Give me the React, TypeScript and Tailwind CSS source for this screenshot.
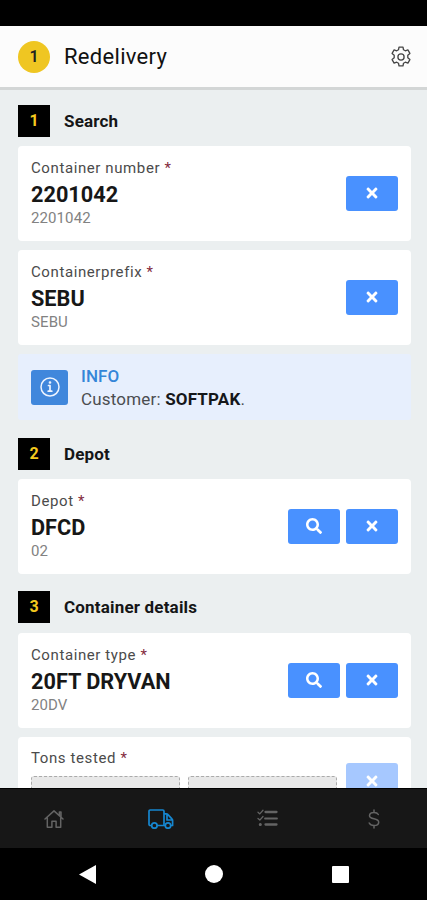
import React from "react";
import { FaSearch, FaTimes } from "react-icons/fa";

const stroke = { fill: "none", stroke: "currentColor", strokeLinecap: "round", strokeLinejoin: "round" } as const;

function GearIcon() {
  return (
    <svg viewBox="0 0 22 22" className="h-[22px] w-[22px] text-[#444]" {...stroke} strokeWidth="1.3">
      <path d="M9 1.1h4l.5 2.7 1.8 1 2.6-.9 2 3.5-2.1 1.8v2.6l2.1 1.8-2 3.5-2.6-.9-1.8 1-.5 2.7H9l-.5-2.7-1.8-1-2.6.9-2-3.5 2.1-1.8V9.2L2.1 7.4l2-3.5 2.6.9 1.8-1z" />
      <circle cx="11" cy="11" r="3.1" />
    </svg>
  );
}

function HomeIcon() {
  return (
    <svg viewBox="0 0 20 20" className="h-5 w-5" {...stroke} strokeWidth="1.5">
      <path d="M1 10 10 1.9l9 8.1M15.4 6.300V3h1.600v4.700M3.300 9v9.300h4.600v-6h4.200v6h4.600V9" />
    </svg>
  );
}

function TruckIcon() {
  return (
    <svg viewBox="0 0 26 20" className="h-5 w-[26px]" {...stroke} strokeWidth="1.7">
      <path d="M3.300 16.500H2.200Q1 16.500 1 15.300V2.200Q1 1 2.200 1h12.600Q16 1 16 2.200v14.300H9.500M16 4.800h2.300q1 0 1.700.8l3.900 4.200q.7.7.7 1.700v5h-1.200M16 16.500h.7M19 6v5h5" />
      <circle cx="6.400" cy="16.500" r="2.700" />
      <circle cx="20" cy="16.500" r="2.700" />
    </svg>
  );
}

function TasksIcon() {
  return (
    <svg viewBox="0 0 21 19" className="h-[19px] w-[21px]" {...stroke} strokeWidth="1.3">
      <path d="m1 3.300 1.800 1.600L6 1.300M1 9.500l1.800 1.600L6 7.500" />
      <rect x="8" y="2.500" width="12" height="1.100" rx=".5" />
      <path d="M8 9.500h12" strokeWidth="1.800" />
      <rect x="8" y="14.900" width="12" height="1.100" rx=".5" />
      <circle cx="3.300" cy="15.500" r=".9" fill="currentColor" />
    </svg>
  );
}

function DollarIcon() {
  return (
    <svg viewBox="0 0 12 20" className="h-5 w-3" {...stroke} strokeWidth="1.5">
      <path d="M6 1v2.500M6 16.500V19M10.300 5.500C9.500 4 8 3.500 6 3.500c-2.800 0-4.500 1.200-4.500 3.200C1.500 11 10.700 8.500 10.700 13.200c0 2.100-1.900 3.300-4.700 3.300-2.300 0-4-.8-4.800-2.500" />
    </svg>
  );
}

function InfoIcon() {
  return (
    <svg viewBox="0 0 20 20" className="h-5 w-5 text-[#edf4ff]" {...stroke} strokeWidth="1.5">
      <circle cx="10" cy="10" r="9" />
      <path d="M8.500 8.500H10V14M8.200 14.200h3.600" strokeWidth="1.7" />
      <circle cx="10" cy="5.500" r=".6" fill="currentColor" />
    </svg>
  );
}

function Section({ n, title }: { n: number; title: string }) {
  return (
    <div className="flex h-8 items-center">
      <span className="flex h-8 w-8 items-center justify-center bg-black text-[16px] font-bold text-[#f4c91f]">{n}</span>
      <h2 className="ml-3.5 text-[17px] font-bold leading-6 tracking-[0.18px] text-[#151617]">{title}</h2>
    </div>
  );
}

function Action({ search = false, disabled = false }: { search?: boolean; disabled?: boolean }) {
  return (
    <button
      aria-label={search ? "Search" : "Clear"}
      disabled={disabled}
      className={`flex h-[35px] w-[52px] items-center justify-center rounded-[3px] text-white ${disabled ? "bg-[#a6c8ff]" : "bg-[#4991ff]"}`}
    >
      {search ? <FaSearch className="h-4 w-4" /> : <FaTimes className="h-4 w-4" />}
    </button>
  );
}

function Label({ children }: { children: React.ReactNode }) {
  return (
    <div className="text-[15px] leading-5 tracking-[0.6px] text-[#4b4b4b]">
      {children} <span className="text-[#842c40]">*</span>
    </div>
  );
}

function Field({ label, value, code, search = false }: { label: string; value: string; code: string; search?: boolean }) {
  return (
    <div className="flex h-[95px] items-center justify-between rounded-[4px] bg-white pl-[13px] pr-[13.5px]">
      <div className="pb-[3px]">
        <Label>{label}</Label>
        <div className="h-8 pt-px text-[21.7px] font-bold leading-8 text-[#171717]">{value}</div>
        <div className="text-[15px] leading-[17px] tracking-[0.1px] text-[#828282]">{code}</div>
      </div>
      <div className="flex gap-1.5 pb-px">
        {search && <Action search />}
        <Action />
      </div>
    </div>
  );
}

export default function App() {
  return (
    <div className="flex h-[900px] w-full flex-col overflow-hidden bg-[#ebeff0] font-['Roboto',sans-serif]">
      <div className="h-[26px] shrink-0 bg-black" />
      <header className="flex h-16 shrink-0 items-center border-b-[3px] border-[#d3d6d6] bg-[#fcfcfc] pl-[18px] pr-[15px]">
        <span className="flex h-8 w-8 items-center justify-center rounded-full bg-[#efc622] text-[16px] font-semibold text-[#222]">1</span>
        <h1 className="ml-3.5 flex-1 text-[22px] tracking-[0.3px] text-[#111]">Redelivery</h1>
        <GearIcon />
      </header>
      <main className="h-[698px] shrink-0 overflow-hidden pl-[18px] pr-4 pt-[15px]">
        <Section n={1} title="Search" />
        <div className="mt-[9px] flex flex-col gap-[9px]">
          <Field label="Container number" value="2201042" code="2201042" />
          <Field label="Containerprefix" value="SEBU" code="SEBU" />
          <div className="flex h-[66px] items-center rounded-[3px] bg-[#e7effd] pl-[13px]">
            <span className="flex h-[35px] w-[37px] items-center justify-center rounded-[3px] bg-[#4087dc]">
              <InfoIcon />
            </span>
            <div className="ml-[13px] pt-px text-[17px] leading-[23px] text-[#4b4d50]">
              <div className="font-medium tracking-[0.1px] text-[#3486d8]">INFO</div>
              <div className="tracking-[0.18px]">Customer: <b className="text-[#15171a]">SOFTPAK</b>.</div>
            </div>
          </div>
        </div>
        <div className="mt-[18px]"><Section n={2} title="Depot" /></div>
        <div className="mt-[9px]"><Field label="Depot" value="DFCD" code="02" search /></div>
        <div className="mt-[17px]"><Section n={3} title="Container details" /></div>
        <div className="mt-2.5"><Field label="Container type" value="20FT DRYVAN" code="20DV" search /></div>
        <div className="mt-[9px] h-[95px] rounded-[4px] bg-white pl-[13px] pr-[13.5px] pt-[11px]">
          <Label>Tons tested</Label>
          <div className="mt-2 flex h-10 gap-2">
            <div className="w-[149px] shrink-0 rounded-[3px] border border-dashed border-[#aaa] bg-[#e8e8e8]" />
            <div className="w-[149px] shrink-0 rounded-[3px] border border-dashed border-[#aaa] bg-[#e8e8e8]" />
            <div className="-mt-[13px] ml-auto"><Action disabled /></div>
          </div>
        </div>
      </main>
      <nav className="grid h-[60px] shrink-0 grid-cols-4 place-items-center border-t border-black bg-[#171717] pl-px text-[#646464]">
        <HomeIcon />
        <span className="text-[#1686cf]"><TruckIcon /></span>
        <TasksIcon />
        <DollarIcon />
      </nav>
      <div className="flex h-[52px] shrink-0 items-center justify-between bg-black pl-[79px] pr-[78px] text-white">
        <svg viewBox="0 0 17 19" className="h-[19px] w-[17px]" fill="currentColor"><path d="M17 0v19L0 9.500z" /></svg>
        <span className="h-[18px] w-[18px] rounded-full bg-white" />
        <span className="h-[17px] w-[17px] rounded-[1px] bg-white" />
      </div>
    </div>
  );
}
